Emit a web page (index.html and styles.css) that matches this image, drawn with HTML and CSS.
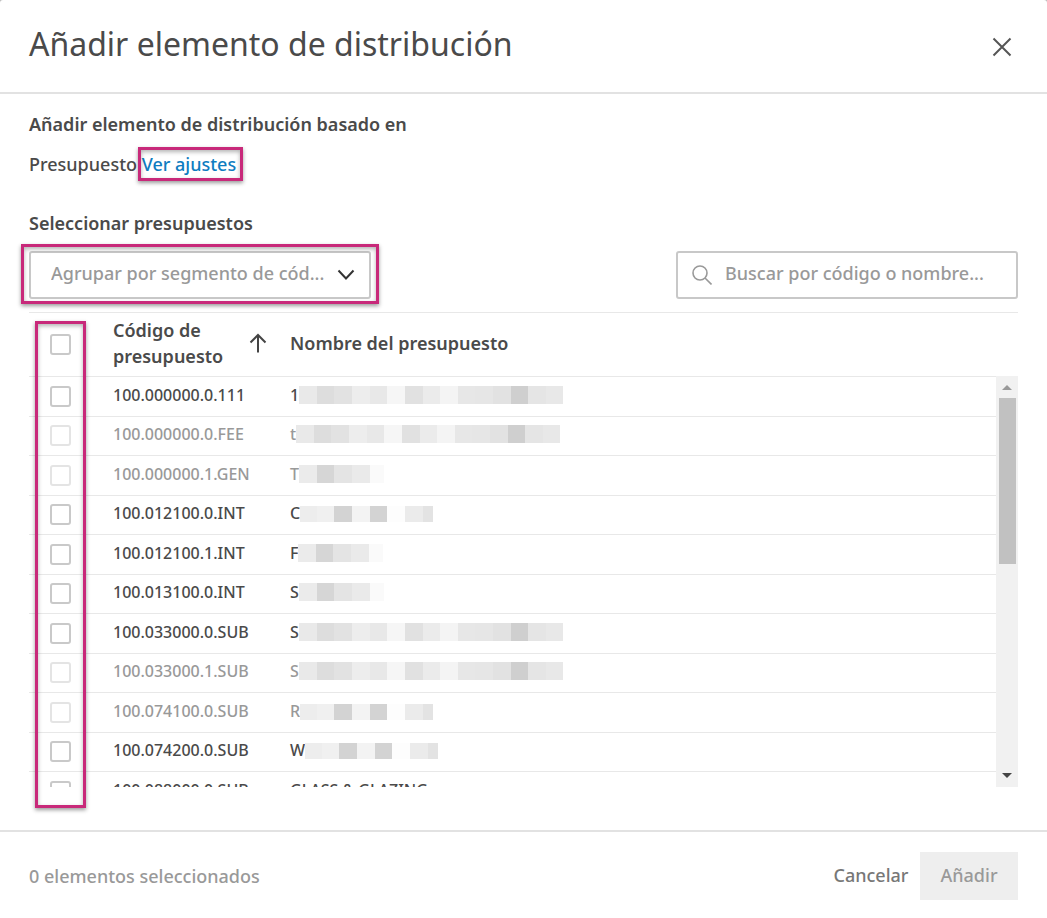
FILE: index.html
```html
<!DOCTYPE html>
<html lang="es">
<head>
  <meta charset="UTF-8">
  <meta name="viewport" content="width=device-width, initial-scale=1">
  <title>Añadir elemento de distribución</title>
  <link rel="stylesheet" href="styles.css">
</head>
<body>

  <!-- redacted name strips, reused by the table rows -->
  <svg class="defs" width="0" height="0" aria-hidden="true">
    <symbol id="strip-long" viewBox="0 0 264 18">
      <rect width="18" height="18" fill="#e9e9e9"/>
      <rect x="18" width="17" height="18" fill="#dddddd"/>
      <rect x="35" width="18" height="18" fill="#e2e2e2"/>
      <rect x="53" width="18" height="18" fill="#ededed"/>
      <rect x="71" width="17" height="18" fill="#e8e8e8"/>
      <rect x="88" width="18" height="18" fill="#f6f6f6"/>
      <rect x="106" width="18" height="18" fill="#e1e1e1"/>
      <rect x="124" width="17" height="18" fill="#ebebeb"/>
      <rect x="141" width="18" height="18" fill="#f4f4f4"/>
      <rect x="159" width="17" height="18" fill="#e7e7e7"/>
      <rect x="176" width="18" height="18" fill="#e6e6e6"/>
      <rect x="194" width="18" height="18" fill="#e2e2e2"/>
      <rect x="212" width="17" height="18" fill="#cfcfcf"/>
      <rect x="229" width="18" height="18" fill="#e5e5e5"/>
      <rect x="247" width="17" height="18" fill="#e8e8e8"/>
    </symbol>
    <symbol id="strip-mid" viewBox="0 0 133 16">
      <rect width="17" height="16" fill="#ededed"/>
      <rect x="17" width="17" height="16" fill="#f0f0f0"/>
      <rect x="34" width="18" height="16" fill="#d3d3d3"/>
      <rect x="52" width="18" height="16" fill="#f3f3f3"/>
      <rect x="70" width="17" height="16" fill="#d3d3d3"/>
      <rect x="87" width="18" height="16" fill="#fdfdfd"/>
      <rect x="105" width="18" height="16" fill="#ebebeb"/>
      <rect x="123" width="10" height="16" fill="#e3e3e3"/>
    </symbol>
    <symbol id="strip-short" viewBox="0 0 85 18">
      <rect width="18" height="18" fill="#ebebeb"/>
      <rect x="18" width="17" height="18" fill="#d6d6d6"/>
      <rect x="35" width="18" height="18" fill="#e4e4e4"/>
      <rect x="53" width="18" height="18" fill="#eaeaea"/>
      <rect x="71" width="14" height="18" fill="#fafafa"/>
    </symbol>
  </svg>

  <div class="dialog" role="dialog" aria-labelledby="dialog-title">
    <header>
      <h1 id="dialog-title">Añadir elemento de distribución</h1>
      <button type="button" class="close-btn" aria-label="Cerrar">
        <svg width="20" height="20" viewBox="0 0 20 20" fill="none" stroke="#555" stroke-width="2"><path d="M1.5 1.5l17 17M18.5 1.5l-17 17"/></svg>
      </button>
    </header>

    <main>
      <h2>Añadir elemento de distribución basado en</h2>
      <p class="based-on">Presupuesto <a href="#" class="marked">Ver ajustes</a></p>

      <h2>Seleccionar presupuestos</h2>
      <div class="toolbar">
        <div class="group-select marked">
          <select aria-label="Agrupar por segmento de código">
            <option>Agrupar por segmento de cód...</option>
          </select>
          <svg width="18" height="12" viewBox="0 0 18 12" fill="none" stroke="#333" stroke-width="2"><path d="M1.5 1.5L9 9.5l7.500-8"/></svg>
        </div>
        <div class="search">
          <svg width="20" height="20" viewBox="0 0 20 20" fill="none" stroke="#999" stroke-width="1.600"><circle cx="8" cy="8" r="7"/><path d="M13 13l6.500 6.500"/></svg>
          <input type="text" aria-label="Buscar" placeholder="Buscar por código o nombre...">
        </div>
      </div>

      <div class="table-area">
        <div class="table-frame">
          <table>
            <thead>
              <tr>
                <th class="check"><input type="checkbox" aria-label="Seleccionar todo"></th>
                <th class="code">
                  <div class="sortable">
                    <span>Código de presupuesto</span>
                    <svg width="18" height="20" viewBox="0 0 18 20" fill="none" stroke="#444" stroke-width="2"><path d="M9 19.500V2M1.500 9.500L9 2l7.500 7.500"/></svg>
                  </div>
                </th>
                <th>Nombre del presupuesto</th>
              </tr>
            </thead>
            <tbody>
              <tr>
                <td class="check"><input type="checkbox" aria-label="100.000000.0.111"></td>
                <td>100.000000.0.111</td>
                <td>1<svg class="strip" width="264" height="18"><use href="#strip-long"/></svg></td>
              </tr>
              <tr class="disabled">
                <td class="check"><input type="checkbox" aria-label="100.000000.0.FEE" disabled></td>
                <td>100.000000.0.FEE</td>
                <td>t<svg class="strip" width="264" height="18"><use href="#strip-long"/></svg></td>
              </tr>
              <tr class="disabled">
                <td class="check"><input type="checkbox" aria-label="100.000000.1.GEN" disabled></td>
                <td>100.000000.1.GEN</td>
                <td>T<svg class="strip" width="85" height="18"><use href="#strip-short"/></svg></td>
              </tr>
              <tr>
                <td class="check"><input type="checkbox" aria-label="100.012100.0.INT"></td>
                <td>100.012100.0.INT</td>
                <td>C<svg class="strip" width="133" height="16"><use href="#strip-mid"/></svg></td>
              </tr>
              <tr>
                <td class="check"><input type="checkbox" aria-label="100.012100.1.INT"></td>
                <td>100.012100.1.INT</td>
                <td>F<svg class="strip" width="85" height="18"><use href="#strip-short"/></svg></td>
              </tr>
              <tr>
                <td class="check"><input type="checkbox" aria-label="100.013100.0.INT"></td>
                <td>100.013100.0.INT</td>
                <td>S<svg class="strip" width="85" height="18"><use href="#strip-short"/></svg></td>
              </tr>
              <tr>
                <td class="check"><input type="checkbox" aria-label="100.033000.0.SUB"></td>
                <td>100.033000.0.SUB</td>
                <td>S<svg class="strip" width="264" height="18"><use href="#strip-long"/></svg></td>
              </tr>
              <tr class="disabled">
                <td class="check"><input type="checkbox" aria-label="100.033000.1.SUB" disabled></td>
                <td>100.033000.1.SUB</td>
                <td>S<svg class="strip" width="264" height="18"><use href="#strip-long"/></svg></td>
              </tr>
              <tr class="disabled">
                <td class="check"><input type="checkbox" aria-label="100.074100.0.SUB" disabled></td>
                <td>100.074100.0.SUB</td>
                <td>R<svg class="strip" width="133" height="16"><use href="#strip-mid"/></svg></td>
              </tr>
              <tr>
                <td class="check"><input type="checkbox" aria-label="100.074200.0.SUB"></td>
                <td>100.074200.0.SUB</td>
                <td>W<svg class="strip" width="133" height="16"><use href="#strip-mid"/></svg></td>
              </tr>
              <tr>
                <td class="check"><input type="checkbox" aria-label="100.088000.0.SUB"></td>
                <td>100.088000.0.SUB</td>
                <td>GLASS &amp; GLAZING</td>
              </tr>
            </tbody>
          </table>
          <div class="scrollbar" aria-hidden="true">
            <svg width="22" height="22" viewBox="0 0 22 22" fill="#999"><path d="M6 14h10l-5-5z"/></svg>
            <div class="thumb"></div>
            <svg width="22" height="22" viewBox="0 0 22 22" fill="#444"><path d="M6 8h10l-5 5z"/></svg>
          </div>
        </div>
        <div class="column-mark"></div>
      </div>
    </main>

    <footer>
      <span class="count">0 elementos seleccionados</span>
      <button type="button" class="cancel-btn">Cancelar</button>
      <button type="button" class="add-btn" disabled>Añadir</button>
    </footer>
  </div>

</body>
</html>
```
FILE: styles.css
```css
* {
  box-sizing: border-box;
}

body {
  margin: 0;
  font-family: "Noto Sans", "Open Sans", sans-serif;
  font-size: 18px;
  font-weight: 500;
  color: #4a4a4a;
  background-color: #bbb;
}

button, input, select {
  font-family: inherit;
  font-size: inherit;
  font-weight: inherit;
}

.defs {
  position: absolute;
}

.dialog {
  display: flex;
  flex-direction: column;
  height: 100vh;
  background-color: #fff;
  border-radius: 3px 3px 0 0;
}

header {
  display: flex;
  justify-content: space-between;
  align-items: center;
  height: 94px;
  padding: 2px 29px 0;
  border-bottom: 2px solid #e2e2e2;
}

h1 {
  margin: 0 0 7px;
  font-size: 32px;
  font-weight: 400;
}

.close-btn {
  display: flex;
  padding: 6px;
  border: none;
  background: none;
  cursor: pointer;
}

main {
  flex: 1;
  min-height: 0;
  display: flex;
  flex-direction: column;
  padding: 17px 29px 43px;
}

h2 {
  margin: 0;
  font-size: 18px;
  line-height: 26px;
  font-weight: 600;
}

.based-on {
  margin: 14px 0 33px;
  line-height: 26px;
}

.based-on a {
  color: #0e7cc0;
  text-decoration: none;
}

/* highlight frames */
.marked {
  position: relative;
}

.marked::after,
.column-mark {
  content: "";
  position: absolute;
  border: 3px solid #c8297a;
  box-shadow: 0 2px 4px rgba(0,0,0,0.4), inset 0 2px 4px rgba(0,0,0,0.3);
  pointer-events: none;
}

.based-on .marked::after {
  inset: -5px -7px -5px -4px;
}

.group-select.marked::after {
  inset: -9px -10px -7px;
}

.column-mark {
  top: 9px;
  bottom: -21px;
  left: 6px;
  width: 51px;
}

.toolbar {
  display: flex;
  justify-content: space-between;
  margin: 15px 0 13px;
}

.group-select,
.search {
  display: flex;
  align-items: center;
  width: 342px;
  height: 48px;
  border: 2px solid #c8c8c8;
  border-radius: 3px;
}

.group-select select {
  appearance: none;
  width: 100%;
  height: 100%;
  padding: 0 40px 4px 20px;
  border: none;
  background: none;
  color: #999;
}

.group-select svg {
  position: absolute;
  right: 14px;
}

.search {
  padding-left: 14px;
  gap: 13px;
}

.search input {
  flex: 1;
  min-width: 0;
  padding: 0 0 4px;
  border: none;
  outline: none;
  background: none;
}

.search input::placeholder {
  color: #999;
}

.table-area {
  position: relative;
  flex: 1;
  min-height: 0;
}

.table-frame {
  display: flex;
  height: 100%;
  overflow: hidden;
  border-top: 1px solid #e8e8e8;
}

table {
  flex: 1;
  table-layout: fixed;
  border-collapse: collapse;
  align-self: flex-start;
}

th, td {
  padding: 0;
  text-align: left;
  border-bottom: 1px solid #e8e8e8;
}

th {
  height: 63px;
  padding-bottom: 2px;
  line-height: 26px;
  font-weight: 600;
}

td {
  height: 39px;
  padding-bottom: 3px;
  font-size: 16px;
  line-height: 20px;
  white-space: nowrap;
}

tbody tr:nth-child(odd) td {
  height: 40px;
}

.check {
  width: 84px;
  padding: 0 0 0 21px;
}

.code {
  width: 177px;
}

.sortable {
  display: flex;
  justify-content: space-between;
  align-items: center;
  padding-right: 23px;
}

.sortable span {
  width: 115px;
}

.disabled {
  color: #999;
}

input[type="checkbox"] {
  appearance: none;
  display: block;
  width: 21px;
  height: 21px;
  margin: 0;
  border: 2px solid #c9c9c9;
  border-radius: 3px;
}

input[type="checkbox"]:disabled {
  border-color: #e4e4e4;
}

.strip {
  vertical-align: -3px;
}

.scrollbar {
  display: flex;
  flex-direction: column;
  width: 22px;
  margin-top: 63px;
  background-color: #f1f1f1;
}

.thumb {
  width: 17px;
  height: 166px;
  margin: 0 auto auto;
  background-color: #c1c1c1;
}

footer {
  display: flex;
  align-items: center;
  height: 88px;
  padding: 2px 29px 0;
  border-top: 2px solid #e2e2e2;
}

.count {
  flex: 1;
  color: #999;
}

.cancel-btn,
.add-btn {
  height: 48px;
  padding: 0 0 2px;
  border: none;
}

.cancel-btn {
  width: 98px;
  background: none;
  color: #777;
}

.add-btn {
  width: 98px;
  background-color: #eee;
  color: #999;
}
```
